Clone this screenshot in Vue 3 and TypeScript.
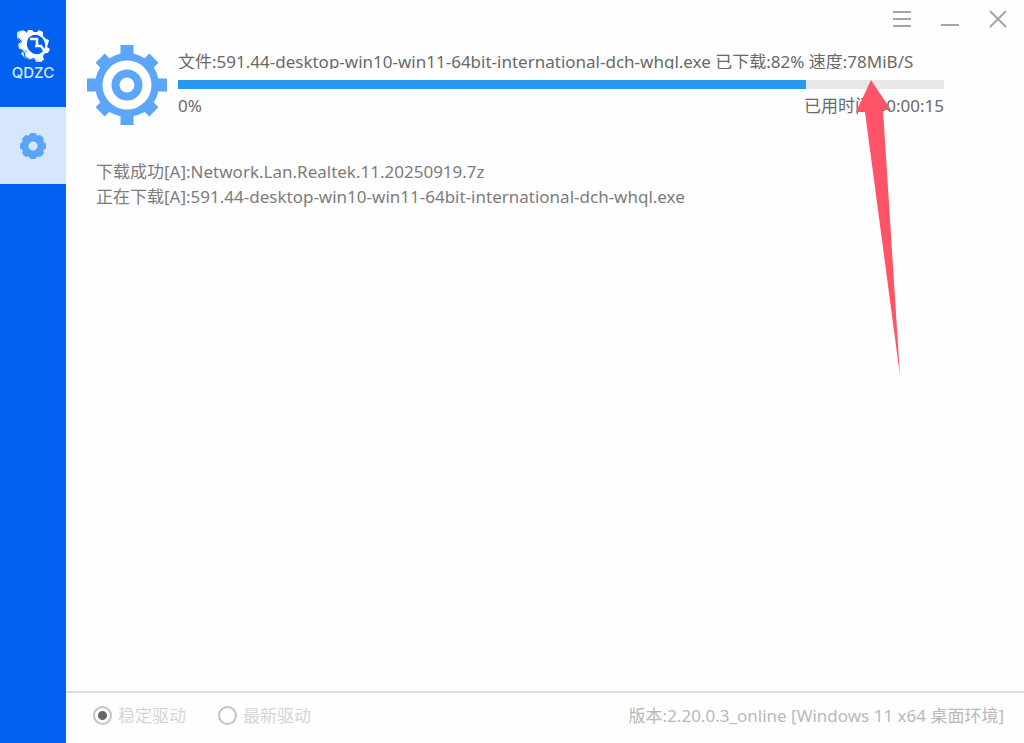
<script setup lang="ts">
import { ref } from 'vue'

const fileName = '591.44-desktop-win10-win11-64bit-international-dch-whql.exe'
const downloaded = 82
const speed = '78MiB/S'
const elapsed = '00:00:15'
const logs: string[] = [
  '下载成功[A]:Network.Lan.Realtek.11.20250919.7z',
  `正在下载[A]:${fileName}`,
]
const channels = [
  { value: 'stable', label: '稳定驱动' },
  { value: 'latest', label: '最新驱动' },
]
const channel = ref('stable')
const angles = [0, 45, 90, 135, 180, 225, 270, 315]
</script>

<template>
  <div class="window">
    <nav class="sidebar">
      <div class="brand">
        <svg class="brand-mark" viewBox="0 0 36 34" aria-hidden="true">
          <path
            fill="#cfe2ff"
            d="M2 3 L8 1 L12 6 L10 22 L20 28 L27 28 L27 33 L21 33 L19 29 L14 31 L10 29 L6 25 L8 21 L4 20 L3 15 L6 13 L2 9 Z"
          />
          <path
            fill="#fff"
            d="M5 3 L10 2 L12 4 L13 1 L17 1 L19 3 L22 3 L24 1 L28 3 L28 7 L31 10 L34 11 L33 15 L32 18 L35 20 L33 24 L30 24 L28 27 L29 31 L25 32 L22 29 L18 28 L15 29 L11 27 L12 23 L9 20 L5 19 L5 16 L8 14 L7 10 L4 8 Z"
          />
          <path d="M3 9 L7 13 M4 20 L9 23 L10 28 L15 31" fill="none" stroke="#0261f0" stroke-width="1" />
          <ellipse cx="21" cy="15.500" rx="9" ry="10" fill="#0261f0" transform="rotate(-25 21 15.500)" />
          <path d="M15 10 H22 V17 M20 17 H26 L31 24" fill="none" stroke="#fff" stroke-width="2.500" />
        </svg>
        <span class="brand-name">QDZC</span>
      </div>
      <button class="nav-item" type="button" aria-label="驱动安装">
        <svg viewBox="0 0 28 28" aria-hidden="true">
          <g fill="#58a6f8">
            <circle cx="14" cy="14" r="11.500" />
            <rect v-for="a in angles" :key="a" x="10.500" y="1" width="7" height="6" rx="2" :transform="`rotate(${a} 14 14)`" />
          </g>
          <circle cx="14" cy="14" r="4.500" fill="#d6e7fd" />
        </svg>
      </button>
    </nav>

    <main class="content">
      <header class="titlebar">
        <button type="button" aria-label="菜单">
          <svg viewBox="0 0 20 20" aria-hidden="true"><path d="M1 4H19M1 11H19M1 18H19" /></svg>
        </button>
        <button type="button" aria-label="最小化">
          <svg viewBox="0 0 20 20" aria-hidden="true"><path d="M1 17H19" /></svg>
        </button>
        <button type="button" aria-label="关闭">
          <svg viewBox="0 0 20 20" aria-hidden="true"><path d="M2 3L18 19M18 3L2 19" /></svg>
        </button>
      </header>

      <section class="download">
        <svg class="gear" viewBox="0 0 80 80" aria-hidden="true">
          <g fill="#5ba6f9">
            <circle cx="40" cy="40" r="32" />
            <rect v-for="a in angles" :key="a" x="33.500" :y="a % 90 ? 2 : 0" width="13" height="14" :transform="`rotate(${a} 40 40)`" />
          </g>
          <circle cx="40" cy="40" r="24.500" fill="#fff" />
          <circle cx="40" cy="40" r="11.500" fill="none" stroke="#5ba6f9" stroke-width="8" />
        </svg>
        <div class="progress">
          <p class="file">文件:{{ fileName }} 已下载:{{ downloaded }}% 速度:{{ speed }}</p>
          <div class="track" role="progressbar" aria-label="下载进度" :aria-valuenow="downloaded">
            <div class="fill" :style="{ width: downloaded + '%' }"></div>
          </div>
          <div class="stats">
            <span>0%</span>
            <span>已用时间:{{ elapsed }}</span>
          </div>
        </div>
      </section>

      <ul class="log">
        <li v-for="line in logs" :key="line">{{ line }}</li>
      </ul>

      <footer class="footer">
        <div class="channels">
          <label v-for="c in channels" :key="c.value">
            <input v-model="channel" type="radio" name="channel" :value="c.value" />
            <span>{{ c.label }}</span>
          </label>
        </div>
        <span class="version">版本:2.20.0.3_online [Windows 11 x64 桌面环境]</span>
      </footer>

      <svg class="pointer" viewBox="0 0 46 298" aria-hidden="true">
        <path d="M16 1 L36 31 L28 31 L45 297 L10 33 L1 33 Z" fill="#ff5367" />
      </svg>
    </main>
  </div>
</template>

<style>
body {
  margin: 0;
}
</style>

<style scoped>
.window {
  display: grid;
  grid-template-columns: 66px 1fr;
  min-height: 100vh;
  background: #fefefe;
  color: #696969;
  font-family: "Noto Sans", "Noto Sans CJK SC", sans-serif;
  font-size: 17px;
  line-height: 25px;
}

.sidebar {
  background: #0261f0;
}

.brand {
  display: flex;
  flex-direction: column;
  align-items: center;
  box-sizing: border-box;
  height: 107px;
  padding-top: 29px;
}

.brand-mark {
  width: 36px;
  height: 34px;
}

.brand-name {
  color: #d9e8ff;
  font-family: Inter, sans-serif;
  font-size: 15px;
  font-weight: 500;
  line-height: 20px;
}

.nav-item {
  display: grid;
  place-items: center;
  width: 100%;
  height: 77px;
  padding: 0;
  border: 0;
  background: #d6e7fd;
}

.nav-item svg {
  width: 28px;
  height: 28px;
}

.content {
  position: relative;
  display: flex;
  flex-direction: column;
  min-width: 0;
}

.titlebar {
  display: flex;
  justify-content: flex-end;
  gap: 28px;
  padding: 8px 16px 0 0;
}

.titlebar button {
  width: 20px;
  height: 20px;
  padding: 0;
  border: 0;
  background: none;
}

.titlebar svg {
  display: block;
  width: 20px;
  height: 20px;
  fill: none;
  stroke: #a4a4a8;
  stroke-width: 2;
}

.download {
  display: flex;
  gap: 11px;
  padding: 17px 80px 0 21px;
}

.gear {
  flex: none;
  width: 80px;
  height: 80px;
}

.progress {
  flex: 1;
  min-width: 0;
}

.file {
  height: 24px;
  margin: 0 0 11px;
  overflow: hidden;
  line-height: 34px;
  white-space: nowrap;
}

.track {
  height: 9px;
  background: #e8e8e8;
}

.fill {
  height: 100%;
  background: #2897f0;
}

.stats {
  display: flex;
  justify-content: space-between;
  padding-top: 4px;
}

.log {
  flex: 1;
  margin: 0;
  padding: 34px 30px 0;
  color: #7c7c7c;
  list-style: none;
}

.footer {
  display: flex;
  align-items: center;
  justify-content: space-between;
  box-sizing: border-box;
  height: 52px;
  padding: 0 20px 6px 27px;
  border-top: 2px solid #dcdcdc;
  color: #b9b9b9;
}

.channels {
  display: flex;
  gap: 32px;
  color: #d5d5d5;
}

.channels label {
  display: flex;
  align-items: center;
  gap: 6px;
}

.channels input {
  width: 19px;
  height: 19px;
  margin: 0;
  border: 2px solid #c4c4c4;
  border-radius: 50%;
  appearance: none;
}

.channels input:checked {
  background: radial-gradient(circle, #666 4px, transparent 5px);
}

.pointer {
  position: absolute;
  top: 79px;
  right: 123px;
  width: 46px;
  height: 298px;
  pointer-events: none;
}
</style>
